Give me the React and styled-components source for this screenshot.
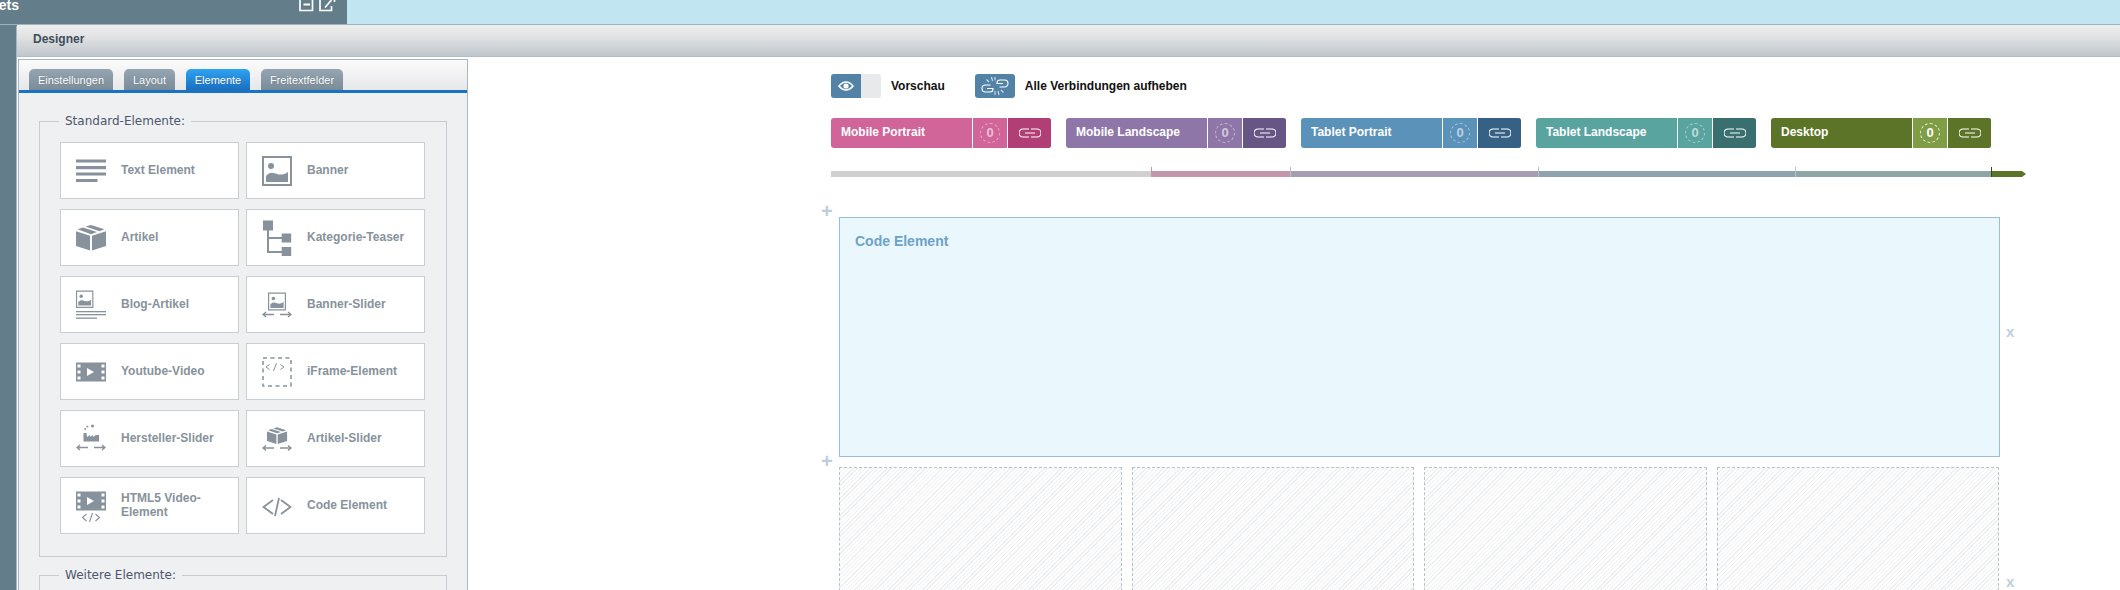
import React from "react";
import styled, { createGlobalStyle } from "styled-components";

const Global = createGlobalStyle`
  html, body { margin: 0; padding: 0; background: #fff; }
  body { font-family: "Liberation Sans", Arial, sans-serif; }
  * { box-sizing: border-box; }
`;

const Page = styled.div`
  width: 2120px;
  height: 590px;
  overflow: hidden;
  display: flex;
  flex-direction: column;
  background: #647d8a;
`;
const TopBar = styled.div`
  height: 25px;
  display: flex;
  flex: none;
  background: #c1e6f1;
  border-bottom: 1px solid #9cb3bf;
`;
const TopPanel = styled.div`
  width: 347px;
  background: #647d8a;
  display: flex;
  justify-content: space-between;
  color: #fff;
`;
const TopTitle = styled.div`
  width: 19px;
  height: 24px;
  overflow: hidden;
  display: flex;
  justify-content: flex-end;
  font-size: 14px;
  font-weight: 700;
  line-height: 11px;
  white-space: nowrap;
`;
const TopIcons = styled.div`
  display: flex;
  gap: 5px;
  padding-right: 11px;
  align-items: flex-start;
`;
const Shell = styled.div`
  flex: 1;
  min-height: 0;
  display: flex;
  padding-left: 16px;
`;
const Win = styled.div`
  flex: 1;
  min-width: 0;
  display: flex;
  flex-direction: column;
  background: #fff;
  border-left: 1px solid #a7b6c0;
  border-top-left-radius: 3px;
`;
const WinHeader = styled.div`
  height: 32px;
  flex: none;
  background: linear-gradient(#eeeeee, #e2e3e5 35%, #c0c7cc);
  border-bottom: 1px solid #b3bcc3;
  padding: 0 16px;
  font-size: 12px;
  font-weight: 700;
  line-height: 29px;
  color: #3f4d5a;
`;
const WinBody = styled.div`
  flex: 1;
  min-height: 0;
  display: flex;
`;
const Sidebar = styled.aside`
  width: 450px;
  flex: none;
  margin: 2px 0 0 1px;
  border: 1px solid #a6b7c4;
  border-bottom: 0;
  background: #eef0f2;
  overflow: hidden;
`;
const TabStrip = styled.div`
  height: 33px;
  display: flex;
  align-items: flex-end;
  padding-left: 10px;
  background: linear-gradient(#fbfbfb, #e6e7e9);
  border-bottom: 3px solid #1a72c4;
`;
const Tab = styled.div`
  height: 21px;
  width: ${(p) => p.$w}px;
  margin-right: ${(p) => p.$mr}px;
  flex: none;
  border-radius: 5px 5px 0 0;
  background: ${(p) =>
    p.$active
      ? "linear-gradient(#2ea3f2, #1a6fbe)"
      : "linear-gradient(#95a5b1, #7b8c99)"};
  color: #fff;
  font-size: 11px;
  line-height: 22px;
  text-align: center;
  text-shadow: 0 0 1px rgba(60, 70, 80, 0.5);
`;
const Fields = styled.div`
  padding: 21px 0 0 20px;
`;
const FieldBox = styled.fieldset`
  width: 408px;
  margin: 0 0 ${(p) => p.$mb || 0}px;
  padding: 13px 21px 22px 20px;
  border: 1px solid #c6ccd1;
  min-width: 0;
`;
const Legend = styled.legend`
  margin-left: -1px;
  padding: 0 6px;
  font-family: "DejaVu Sans", sans-serif;
  font-size: 12px;
  line-height: 15px;
  color: #50566d;
`;
const CardGrid = styled.div`
  display: grid;
  grid-template-columns: 179px 179px;
  grid-auto-rows: 57px;
  column-gap: 7px;
  row-gap: 10px;
`;
const Card = styled.div`
  display: flex;
  align-items: center;
  gap: 15px;
  padding-left: 15px;
  background: #fff;
  border: 1px solid #c9ced3;
  color: #87929c;
  font-size: 12px;
  font-weight: 700;
  line-height: 14px;
`;
const CardLabel = styled.span`
  margin-bottom: 2px;
`;
const CardIcon = styled.svg`
  width: 30px;
  height: 40px;
  flex: none;
  fill: #87929c;
`;
const Canvas = styled.main`
  flex: 1;
  min-width: 0;
  padding: 17px 0 0 363px;
  position: relative;
`;
const ToolRow = styled.div`
  display: flex;
  align-items: center;
  height: 24px;
  font-size: 12px;
  font-weight: 700;
  color: #111;
`;
const Toggle = styled.div`
  width: 50px;
  height: 24px;
  display: flex;
  border-radius: 3px;
  overflow: hidden;
  background: #e8e9eb;
  margin-right: 10px;
`;
const ToggleOn = styled.div`
  width: 30px;
  background: #5283a7;
  display: flex;
  align-items: center;
  justify-content: center;
`;
const ToolLabel = styled.span`
  margin-right: ${(p) => p.$mr || 0}px;
`;
const IconBtn = styled.div`
  width: 40px;
  height: 24px;
  border-radius: 3px;
  background: #5283a7;
  display: flex;
  align-items: center;
  justify-content: center;
  margin-right: 10px;
`;
const Devices = styled.div`
  display: grid;
  grid-template-columns: repeat(5, 220px);
  column-gap: 15px;
  margin-top: 20px;
`;
const Chip = styled.div`
  height: 30px;
  display: flex;
  border-radius: 3px;
  overflow: hidden;
  color: #fff;
  background: ${(p) => p.$bg};
`;
const ChipLabel = styled.div`
  flex: 1;
  padding-left: 10px;
  font-size: 12px;
  font-weight: 700;
  line-height: 29px;
  white-space: nowrap;
`;
const ChipCount = styled.div`
  width: 35px;
  border-left: 1px solid #fff;
  background: ${(p) => p.$bg};
  display: flex;
  align-items: center;
  justify-content: center;
`;
const CountRing = styled.div`
  width: 20px;
  height: 20px;
  border-radius: 50%;
  border: 1px dashed rgba(255, 255, 255, ${(p) => (p.$strong ? 0.9 : 0.5)});
  color: rgba(255, 255, 255, ${(p) => (p.$strong ? 1 : 0.6)});
  font-size: 13px;
  font-weight: 700;
  line-height: 18px;
  text-align: center;
`;
const ChipLink = styled.div`
  width: 44px;
  flex: none;
  border-left: 1px solid #fff;
  background: ${(p) => p.$bg};
  display: flex;
  align-items: center;
  justify-content: center;
`;
const Timeline = styled.div`
  display: flex;
  height: 6px;
  margin-top: 23px;
`;
const Segment = styled.div`
  position: relative;
  width: ${(p) => p.$w}px;
  background: ${(p) => p.$bg};
  &::before {
    content: "";
    display: ${(p) => (p.$tick ? "block" : "none")};
    position: absolute;
    left: 0;
    top: -4px;
    width: 1px;
    height: 10px;
    background: ${(p) => p.$tick};
  }
`;
const TimelineTip = styled.svg`
  width: 9px;
  height: 6px;
  fill: #5c7428;
  flex: none;
`;
const Rows = styled.div`
  margin: 40px 0 0 8px;
  width: 1161px;
  display: flex;
  flex-direction: column;
  gap: 10px;
`;
const RowWrap = styled.div`
  position: relative;
`;
const AddMark = styled.span`
  position: absolute;
  left: -18px;
  top: -16px;
  color: #bccfdf;
  font-size: 20px;
  font-weight: 700;
  line-height: 20px;
`;
const RemoveMark = styled.span`
  position: absolute;
  left: 1167px;
  top: 108px;
  color: #bccfdf;
  font-size: 15px;
  font-weight: 700;
  line-height: 14px;
`;
const CodeBlock = styled.div`
  height: 240px;
  background: #eaf8fe;
  border: 1px solid #94c0da;
  padding: 15px;
  color: #6da2c9;
  font-size: 14px;
  font-weight: 700;
  line-height: 17px;
`;
const Slots = styled.div`
  display: grid;
  grid-template-columns: 283px 282px 283px 282px;
  column-gap: 10px;
  margin-right: 1px;
`;
const Slot = styled.div`
  height: 200px;
  border: 1px dashed #b7c2cc;
  background: repeating-linear-gradient(
    135deg,
    #eceef0 0,
    #eceef0 1px,
    #fff 1px,
    #fff 3px
  );
`;

const Picture = ({ x, y, s }) => (
  <g transform={`translate(${x} ${y}) scale(${s})`}>
    <path fillRule="evenodd" d="M0 0h30v30H0zM2 2v26h26V2z" />
    <circle cx="9" cy="10" r="3" />
    <path d="M4 26v-6c4-5 8-3 11-2s7 1 11-2v10z" />
  </g>
);
const Arrows = ({ y }) => (
  <path
    stroke="#87929c"
    strokeWidth="1.400"
    fill="none"
    d={`M1 ${y}h11M4 ${y - 2.5}L1 ${y}l3 2.500M18 ${y}h11M26 ${y - 2.5}l3 2.500-3 2.500`}
  />
);
const Film = ({ y }) => (
  <g transform={`translate(0 ${y})`}>
    <path
      fillRule="evenodd"
      d="M0 0h30v19H0zM1.500 2v3h3V2zM1.500 8v3h3V8zM1.500 14v3h3v-3zM25.500 2v3h3V2zM25.500 8v3h3V8zM25.500 14v3h3v-3zM11 5.500v8l7-4z"
    />
  </g>
);
const Box = ({ t }) => (
  <g transform={t}>
    <path d="M0 8l14 5.500V31L0 25.500zM30 8l-14 5.500V31l14-5.500zM1.500 5.800L7 3.500 21 9l-6 2.500zM9.500 2.500L15 0.500l13.500 5.300L23.500 8z" />
  </g>
);

const icons = {
  text: (
    <>
      <rect y="8.500" width="30" height="3" />
      <rect y="15" width="30" height="3.200" />
      <rect y="21.500" width="30" height="3" />
      <rect y="28" width="21.500" height="3" />
    </>
  ),
  banner: <Picture x={0} y={5} s={1} />,
  box: <Box t="translate(0 6.500) scale(1 .84)" />,
  tree: (
    <>
      <rect x="1" y="2.500" width="10" height="10" />
      <path d="M5 12h2v7h13v2H7v12h13v2H5z" />
      <rect x="19.700" y="15.500" width="9.500" height="9" />
      <rect x="19.700" y="29" width="9.500" height="9" />
    </>
  ),
  blog: (
    <>
      <Picture x={0} y={5.500} s={0.58} />
      <rect y="26" width="30" height="1.300" />
      <rect y="29" width="30" height="1.300" />
      <rect y="32.500" width="21" height="1.300" />
    </>
  ),
  bannerSlide: (
    <>
      <Picture x={6} y={7.500} s={0.6} />
      <Arrows y={29.500} />
    </>
  ),
  youtube: <Film y={10.500} />,
  iframe: (
    <>
      <rect x="1" y="6" width="28" height="28" fill="none" stroke="#87929c" strokeWidth="1.500" strokeDasharray="4 3.500" />
      <path
        d="M7.500 12.500L4 15l3.500 2.500M18.500 12.500L22 15l-3.500 2.500M14.500 11l-3 8"
        fill="none"
        stroke="#87929c"
        strokeWidth="1"
      />
    </>
  ),
  factory: (
    <>
      <path d="M7.500 14h3l.5 4 3-2v2l3-2v2l3-2h3v6.500H7.500z" />
      <path d="M9 11q0-3 4-4" fill="none" stroke="#87929c" strokeWidth="1.400" strokeDasharray="2 1.400" />
      <circle cx="16.500" cy="7" r="1.500" />
      <Arrows y={28.500} />
    </>
  ),
  boxSlide: (
    <>
      <Box t="translate(5 8) scale(.67 .55)" />
      <Arrows y={29} />
    </>
  ),
  html5: (
    <>
      <Film y={5.500} />
      <path d="M10.500 28l-4 3.500 4 3.500M19.500 28l4 3.500-4 3.500M16.500 27l-3 9" fill="none" stroke="#87929c" strokeWidth="1.100" />
    </>
  ),
  code: (
    <path d="M11 14L1.500 21l9.500 7M19 14l9.500 7-9.500 7M17 12l-4 18" fill="none" stroke="#87929c" strokeWidth="1.800" />
  ),
};

const cards = [
  ["Text Element", "text"],
  ["Banner", "banner"],
  ["Artikel", "box"],
  ["Kategorie-Teaser", "tree"],
  ["Blog-Artikel", "blog"],
  ["Banner-Slider", "bannerSlide"],
  ["Youtube-Video", "youtube"],
  ["iFrame-Element", "iframe"],
  ["Hersteller-Slider", "factory"],
  ["Artikel-Slider", "boxSlide"],
  ["HTML5 Video-Element", "html5"],
  ["Code Element", "code"],
];

const devices = [
  { name: "Mobile Portrait", bg: "#d16498", link: "#b13f75" },
  { name: "Mobile Landscape", bg: "#8e77a8", link: "#675586" },
  { name: "Tablet Portrait", bg: "#5b92b9", link: "#366185" },
  { name: "Tablet Landscape", bg: "#5aa4a0", link: "#3a6f6f" },
  { name: "Desktop", bg: "#5c7428", count: "#7f9d45", link: "#5c7428", strong: true },
];

const segments = [
  { w: 320, bg: "#d0d0d0" },
  { w: 139, bg: "#c496ab", tick: "#c496ab" },
  { w: 248, bg: "#a79db0", tick: "#c3bccb" },
  { w: 257, bg: "#8fa3af", tick: "#b5c4cf" },
  { w: 196, bg: "#90a5a5", tick: "#b6c8c8" },
  { w: 26, bg: "#5c7428", tick: "#36461a" },
];

const LinkIcon = () => (
  <svg width="22" height="10" viewBox="0 0 22 10" fill="none" stroke="#fff" strokeWidth="1.100">
    <path d="M10 1H4a4 4 0 0 0 0 8h6M12 1h6a4 4 0 0 1 0 8h-6M6 5h10" />
  </svg>
);

export default function App() {
  return (
    <Page>
      <Global />
      <TopBar>
        <TopPanel>
          <TopTitle>Widgets</TopTitle>
          <TopIcons>
            <svg width="15" height="13" viewBox="0 0 15 13" fill="none" stroke="#fff" strokeWidth="1.700">
              <path d="M1 0v10.500h12.500V0" />
              <path d="M4.500 4.500h6.500" strokeWidth="2" />
            </svg>
            <svg width="17" height="13" viewBox="0 0 17 13" fill="none" stroke="#fff" strokeWidth="1.700">
              <path d="M1 0v10.500h11.500V6M6 7.500L12.500 0M15.500 0v2" />
            </svg>
          </TopIcons>
        </TopPanel>
      </TopBar>
      <Shell>
        <Win>
          <WinHeader>Designer</WinHeader>
          <WinBody>
            <Sidebar>
              <TabStrip>
                <Tab $w={84} $mr={11}>Einstellungen</Tab>
                <Tab $w={51} $mr={11}>Layout</Tab>
                <Tab $w={64} $mr={11} $active>Elemente</Tab>
                <Tab $w={82} $mr={0}>Freitextfelder</Tab>
              </TabStrip>
              <Fields>
                <FieldBox $mb={11}>
                  <Legend>Standard-Elemente:</Legend>
                  <CardGrid>
                    {cards.map(([label, icon]) => (
                      <Card key={label}>
                        <CardIcon viewBox="0 0 30 40">{icons[icon]}</CardIcon>
                        <CardLabel>{label}</CardLabel>
                      </Card>
                    ))}
                  </CardGrid>
                </FieldBox>
                <FieldBox>
                  <Legend>Weitere Elemente:</Legend>
                </FieldBox>
              </Fields>
            </Sidebar>
            <Canvas>
              <ToolRow>
                <Toggle>
                  <ToggleOn>
                    <svg width="16" height="10" viewBox="0 0 16 10" fill="none" stroke="#fff" strokeWidth="1.600">
                      <path d="M1 5c2-2.500 4.500-4 7-4s5 1.500 7 4c-2 2.500-4.500 4-7 4S3 7.500 1 5z" />
                      <circle cx="8" cy="5" r="1.800" fill="#fff" />
                    </svg>
                  </ToggleOn>
                </Toggle>
                <ToolLabel $mr={30}>Vorschau</ToolLabel>
                <IconBtn>
                  <svg width="28" height="20" viewBox="0 0 28 20" fill="none" stroke="#fff" strokeWidth="1.100">
                    <path d="M9.500 9h-5a3.500 3.500 0 0 0 0 7H9a3 3 0 0 0 3-3v-.5H6M18.500 11h5a3.500 3.500 0 0 0 0-7H19a3 3 0 0 0-3 3v.5h6" />
                    <path d="M8 6L5.500 3.500M11.500 5l-1-4M14 4.500V1M14 15v4M17 15l1 4M20 14l2.500 2.500" opacity=".75" />
                  </svg>
                </IconBtn>
                <ToolLabel>Alle Verbindungen aufheben</ToolLabel>
              </ToolRow>
              <Devices>
                {devices.map((d) => (
                  <Chip key={d.name} $bg={d.bg}>
                    <ChipLabel>{d.name}</ChipLabel>
                    <ChipCount $bg={d.count || d.bg}>
                      <CountRing $strong={d.strong}>0</CountRing>
                    </ChipCount>
                    <ChipLink $bg={d.link}>
                      <LinkIcon />
                    </ChipLink>
                  </Chip>
                ))}
              </Devices>
              <Timeline>
                {segments.map((s) => (
                  <Segment key={s.bg} $w={s.w} $bg={s.bg} $tick={s.tick} />
                ))}
                <TimelineTip viewBox="0 0 9 6">
                  <path d="M0 0h5l4 3-4 3H0z" />
                </TimelineTip>
              </Timeline>
              <Rows>
                <RowWrap>
                  <AddMark>+</AddMark>
                  <CodeBlock>Code Element</CodeBlock>
                  <RemoveMark>x</RemoveMark>
                </RowWrap>
                <RowWrap>
                  <AddMark>+</AddMark>
                  <Slots>
                    <Slot />
                    <Slot />
                    <Slot />
                    <Slot />
                  </Slots>
                  <RemoveMark>x</RemoveMark>
                </RowWrap>
              </Rows>
            </Canvas>
          </WinBody>
        </Win>
      </Shell>
    </Page>
  );
}
